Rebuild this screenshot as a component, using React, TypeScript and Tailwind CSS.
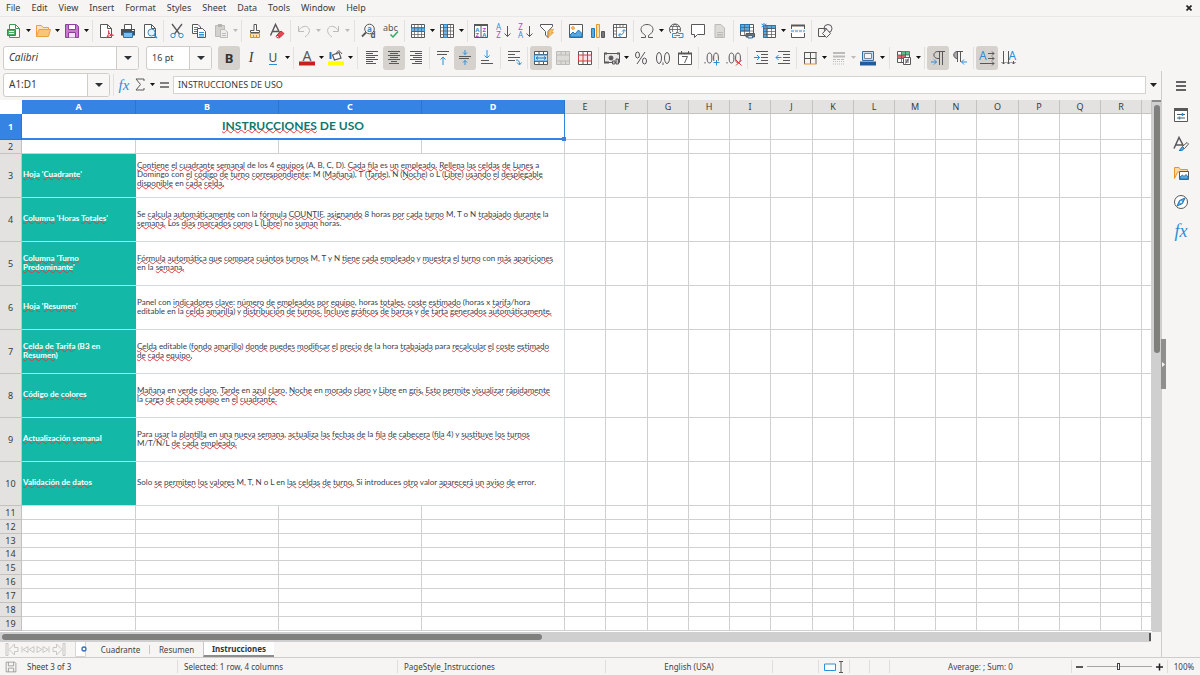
import React from "react";

const K = "#585858";
const BL = "#2d8fd6";
const FADE = "#bdbbb8";

function Svg({ children, size = 16 }: { children: React.ReactNode; size?: number }) {
  return (
    <svg width={size} height={size} viewBox="0 0 16 16" fill="none" stroke={K} strokeWidth="1" className="shrink-0 overflow-visible" aria-hidden="true">
      {children}
    </svg>
  );
}

function Glyphs({ x, y, size = 8, color = K, bold = false, children }: { x: number; y: number; size?: number; color?: string; bold?: boolean; children: string }) {
  return (
    <text x={x} y={y} fontSize={size} fill={color} stroke="none" fontWeight={bold ? 700 : 400} fontFamily="Noto Sans, sans-serif">
      {children}
    </text>
  );
}

const lines = (...d: [number, number, number][]) => d.map(([x1, x2, y]) => <path key={y} d={`M${x1} ${y}H${x2}`} />);

const icons: Record<string, React.ReactNode> = {
  newDoc: (
    <>
      <path d="M3.500 1.500H9.500L13.500 5.500V14.500H3.500Z" fill="#fff" stroke="#3a9c55" />
      <path d="M9.500 1.500V5.500H13.500" stroke="#3a9c55" />
      <path d="M1.500 6.500H9.500V12.500H1.500Z" fill="#4caf68" stroke="#2f8f4b" />
      <path d="M3 8.500H8M3 10.500H8" stroke="#fff" />
    </>
  ),
  folder: (
    <>
      <path d="M1.500 13.500V2.500H6.500L8 4.500H13.500V7" fill="#fbe3bd" stroke="#e8a33d" />
      <path d="M1.500 13.500L4 6.500H15.500L13.500 13.500Z" fill="#f7c678" stroke="#e8a33d" />
    </>
  ),
  save: (
    <>
      <path d="M1.500 1.500H12.500L14.500 3.500V14.500H1.500Z" fill="#c679cf" stroke="#8e3f9b" />
      <path d="M4.500 1.500H11.500V6.500H4.500Z" fill="#fff" stroke="#8e3f9b" />
      <path d="M4.500 14.500V9.500H11.500V14.500" fill="#f3e1f5" stroke="#8e3f9b" />
    </>
  ),
  pdf: (
    <>
      <path d="M2.500 1.500H9.500L13.500 5.500V14.500H2.500Z" fill="#fff" />
      <path d="M9.500 1.500V5.500H13.500" />
      <path d="M8 15C10.500 12.500 11 10 10.500 7.500C10.500 11 13 12.500 15.500 12.200C12.500 12 10 13 8 15Z" fill="#fff" stroke="#dc3b4b" />
    </>
  ),
  print: (
    <>
      <path d="M4.500 6V1.500H11.500V6" fill="#fff" />
      <path d="M1 6H15V12.500H1Z" fill="#4a4f54" stroke="none" />
      <path d="M3.500 9.500H12.500V14.500H3.500Z" fill="#7bbdec" stroke="#316e9e" />
      <path d="M12 7.500H14" stroke="#fff" />
    </>
  ),
  preview: (
    <>
      <path d="M2.500 1.500H9.500L13.500 5.500V14.500H2.500Z" fill="#fff" />
      <path d="M9.500 1.500V5.500H13.500" />
      <circle cx="9.500" cy="9.500" r="3.500" fill="#e6f3fc" stroke={BL} />
      <path d="M12 12L15 15" stroke={BL} strokeWidth="1.500" />
    </>
  ),
  cut: (
    <>
      <path d="M3 1L10.500 11M13 1L5.500 11" strokeWidth="1.300" />
      <circle cx="4" cy="12.500" r="2.200" stroke={BL} />
      <circle cx="12" cy="12.500" r="2.200" stroke={BL} />
    </>
  ),
  copy: (
    <>
      <path d="M1.500 1.500H7L9.500 4V10.500H1.500Z" fill="#fff" />
      <path d="M3 4.500H7M3 6.500H7M3 8.500H7" stroke={BL} />
      <path d="M6.500 5.500H11.500L14.500 8.500V14.500H6.500Z" fill="#fff" />
      <path d="M8 9.500H13M8 11.500H13M8 13H13" stroke={BL} />
    </>
  ),
  paste: (
    <>
      <path d="M2.500 2.500H11.500V13.500H2.500Z" fill="#d4d2cf" stroke={FADE} />
      <path d="M5 1H9V4H5Z" fill="#b5b3b0" stroke="none" />
      <path d="M7.500 6.500H12L14.500 9V14.500H7.500Z" fill="#eeedeb" stroke={FADE} />
      <path d="M9 10.500H13M9 12.500H13" stroke={FADE} />
    </>
  ),
  brush: (
    <>
      <path d="M7 1.500H9.500V7.500H12.500V9.500H3.500V7.500H7Z" fill="#fff" />
      <path d="M3.500 10.500H12.500V14.500H3.500Z" fill="#fbe0b5" stroke="#e0902a" />
      <path d="M6.500 12V14M9.500 12V14" stroke="#e0902a" />
    </>
  ),
  clear: (
    <>
      <path d="M1.500 12.500L6.500 1.500L11 10.500M3.500 8.500H10" strokeWidth="1.400" />
      <path d="M8 12L12 8L15 10.500L11 14.500Z" fill="#e84855" stroke="#c92a3a" />
      <path d="M8 12L11 14.500L9 15L7 13.500Z" fill="#fff" stroke="#c92a3a" />
    </>
  ),
  undo: <path d="M2.500 3V8.500H8M2.500 8C5 3.500 9 2.500 11.500 4C15 6.500 13.500 11 9 14" stroke={FADE} />,
  redo: <path d="M13.500 3V8.500H8M13.500 8C11 3.500 7 2.500 4.500 4C1 6.500 2.500 11 7 14" stroke={FADE} />,
  find: (
    <>
      <circle cx="8.500" cy="6" r="4.800" />
      <path d="M5 9.500L1 13.500" strokeWidth="1.800" />
      <Glyphs x={6} y={8.500} size={8} color={BL} bold>a</Glyphs>
      <Glyphs x={9.500} y={15} size={8} bold>d</Glyphs>
    </>
  ),
  spell: (
    <>
      <Glyphs x={0} y={8} size={9}>abc</Glyphs>
      <path d="M7.500 11.500L10 14L15 8.500" stroke="#2fa866" strokeWidth="1.500" />
    </>
  ),
  rows: (
    <>
      <path d="M1.500 1.500H14.500V14.500H1.500Z" fill="#fff" />
      <path d="M1.500 5H14.500V8.500H1.500Z" fill="#6db5ea" stroke={BL} />
      <path d="M1.500 4.500H14.500M1.500 8.500H14.500M1.500 11.500H14.500M4.500 1.500V14.500M8 1.500V14.500M11.500 1.500V14.500" strokeWidth=".7" />
    </>
  ),
  cols: (
    <>
      <path d="M1.500 1.500H14.500V14.500H1.500Z" fill="#fff" />
      <path d="M4.500 1.500H8.500V14.500H4.500Z" fill="#6db5ea" stroke={BL} />
      <path d="M1.500 4.500H14.500M1.500 8H14.500M1.500 11.500H14.500M4.500 1.500V14.500M8.500 1.500V14.500M11.500 1.500V14.500" strokeWidth=".7" />
    </>
  ),
  sort: (
    <>
      <path d="M1.500 2V14.500H14.500V2M8 3V14.500" fill="#fff" />
      <path d="M1 2H15" strokeWidth="2" />
      <Glyphs x={2.300} y={8.500} size={6} color={BL} bold>A</Glyphs>
      <Glyphs x={2.500} y={14} size={6} color="#b04ac0" bold>Z</Glyphs>
      <Glyphs x={9.500} y={8.500} size={6} color="#b04ac0" bold>Z</Glyphs>
      <Glyphs x={9.300} y={14} size={6} color={BL} bold>A</Glyphs>
    </>
  ),
  sortUp: (
    <>
      <Glyphs x={1} y={7} size={8} color={BL}>A</Glyphs>
      <Glyphs x={1.300} y={15} size={8} color="#b04ac0">Z</Glyphs>
      <path d="M12.500 3V13.500M9.500 10.500L12.500 13.500L15.500 10.500" />
    </>
  ),
  sortDown: (
    <>
      <Glyphs x={1.300} y={7} size={8} color="#b04ac0">Z</Glyphs>
      <Glyphs x={1} y={15} size={8} color={BL}>A</Glyphs>
      <path d="M12.500 3V13.500M9.500 10.500L12.500 13.500L15.500 10.500" />
    </>
  ),
  filter: (
    <>
      <path d="M1.500 1.500H13.500V3.500L9 8.500V14.500L6.500 12V8.500L1.500 3.500Z" fill="#fff" />
      <path d="M11 6.500H14.500L12.500 9.500H14.500L8.500 15L10.500 10.500H9Z" fill="#f8c06a" stroke="#e8942a" strokeWidth=".7" />
    </>
  ),
  image: (
    <>
      <path d="M1.500 1.500H14.500V14.500H1.500Z" fill="#fff" />
      <circle cx="5" cy="5" r="1.500" fill="#f8c06a" stroke="#e8942a" strokeWidth=".7" />
      <path d="M2 14V12L5 9L7 11L10.500 7L14 10.500V14Z" fill="#58a9e2" stroke="#1f78bd" />
    </>
  ),
  chart: (
    <>
      <path d="M1.500 5.500H4.500V14.500H1.500Z" fill="#58a9e2" stroke="#1f78bd" />
      <path d="M6.500 1.500H9.500V14.500H6.500Z" fill="#fbe0b5" stroke="#e8942a" />
      <path d="M11.500 8.500H14.500V14.500H11.500Z" fill="#777" />
    </>
  ),
  pivot: (
    <>
      <path d="M1.500 1.500H14.500V14.500H1.500Z" fill="#fff" />
      <path d="M1.500 4.500H14.500M4.500 1.500V14.500M8 1.500V4.500M11 1.500V4.500M1.500 8H4.500M1.500 11H4.500" strokeWidth=".8" />
      <path d="M7 12C10.500 12 12 10.500 12 7M10 8.500L12 6.500L14 8.500M8.500 10L6.500 12L8.500 14" stroke={BL} />
    </>
  ),
  omega: <path d="M2 14.500H6.500V12.500C3.500 10.500 2 8.500 2 6.500C2 3.500 4.500 1.500 8 1.500C11.500 1.500 14 3.500 14 6.500C14 8.500 12.500 10.500 9.500 12.500V14.500H14" />,
  link: (
    <>
      <circle cx="7" cy="6.500" r="5.500" fill="#fff" />
      <path d="M1.500 6.500H12.500M2.500 3.500H11.500M2.500 9.500H11M7 1C3.500 4 3.500 9 7 12M7 1C10.500 4 10.500 9 7 12" strokeWidth=".8" />
      <path d="M8 10.500H4.500V14.500H8.500M10.500 10.500H14.500V14.500H10.500M7.500 12.500H12" stroke="#f6f5f4" strokeWidth="3" />
      <path d="M8 10.500H4.500V14.500H8.500M10.500 10.500H15V14.500H10.500M7.500 12.500H12" stroke={BL} />
    </>
  ),
  comment: <path d="M1.500 1.500H14.500V11.500H7.500L4.500 14.500V11.500H1.500Z" fill="#fff" />,
  header: <path d="M3 1.500H9L12.500 5V14.500H3Z M5 9.500H11M5 11.500H11M5 13H11" fill="#dddbd8" stroke={FADE} />,
  printArea: (
    <>
      <path d="M1.500 1.500H14.500V12.500H1.500Z" fill="#fff" />
      <path d="M1.500 1.500H10.500V8H1.500Z" fill="#58a9e2" stroke="#1f78bd" />
      <path d="M1.500 4.500H14.500M1.500 8H14.500M5.500 1.500V12.500M10.500 1.500V12.500" strokeWidth=".7" />
      <path d="M7 10.500H15.500V14H7Z" fill="#6a6f74" />
      <path d="M9 12.500H13.500V15H9Z" fill="#cfe6f7" stroke="#316e9e" />
    </>
  ),
  freeze: (
    <>
      <path d="M2.500 2.500H14.500V14.500H2.500Z" fill="#fff" />
      <path d="M2.500 2.500H14.500V5.500H6V14.500H2.500Z" fill="#58a9e2" stroke="#1f78bd" />
      <path d="M2.500 5.500H14.500M2.500 8.500H14.500M2.500 11.500H14.500M6 2.500V14.500M10.500 2.500V14.500" strokeWidth=".7" />
      <path d="M3 0V5M.500 1L5.500 4M5.500 1L.500 4" stroke={BL} />
    </>
  ),
  split: (
    <>
      <path d="M1.500 6V2.500H14.500V6M1.500 10V14.500H14.500V10" fill="#fff" />
      <path d="M1 2.500H15" strokeWidth="2" />
      <path d="M1 8H15" stroke={BL} strokeDasharray="3 1" />
    </>
  ),
  shapes: (
    <>
      <path d="M1.500 5.500H9.500V13.500H1.500Z" />
      <circle cx="11" cy="5.500" r="4" />
      <path d="M9.500 6L13.500 10.500L9.500 14.500L5.500 10.500Z" fill="#f6f5f4" />
    </>
  ),
  fontColor: (
    <>
      <Glyphs x={3.500} y={10.500} size={14}>A</Glyphs>
      <path d="M0 13.500H16" stroke="#c5221f" strokeWidth="4" />
    </>
  ),
  bucket: (
    <>
      <path d="M2.500 2V9" stroke="#1f78bd" strokeWidth="2" />
      <path d="M4.500 5L11 2.500L13 8L6.500 10Z" fill="#fff" strokeWidth="1.200" />
      <path d="M9 4.500C8 1.500 10.500 0 12 1.500L14 4" />
      <path d="M0 13.500H16" stroke="#ffff00" strokeWidth="4" />
    </>
  ),
  left: lines([2, 14, 1.500], [2, 9, 3.500], [2, 14, 5.500], [2, 11, 7.500], [2, 14, 9.500], [2, 9, 11.500], [2, 12, 13.500]),
  center: lines([2, 14, 1.500], [4, 12, 3.500], [2, 14, 5.500], [4, 12, 7.500], [2, 14, 9.500], [5, 11, 11.500], [3, 13, 13.500]),
  right: lines([2, 14, 1.500], [7, 14, 3.500], [2, 14, 5.500], [5, 14, 7.500], [2, 14, 9.500], [7, 14, 11.500], [4, 14, 13.500]),
  vTop: (
    <>
      {lines([2, 14, 1.500], [2, 12, 4.500])}
      <path d="M8 15V7M5.500 9.500L8 7L10.500 9.500" stroke={BL} />
    </>
  ),
  vMiddle: (
    <>
      {lines([2, 14, 6.500], [2, 12, 8.500])}
      <path d="M8 0V4.500M6 2.500L8 4.500L10 2.500M8 15V10.500M6 12.500L8 10.500L10 12.500" stroke={BL} />
    </>
  ),
  vBottom: (
    <>
      {lines([2, 10, 10.500], [2, 14, 13.500])}
      <path d="M8 0V8M5.500 5.500L8 8L10.500 5.500" stroke={BL} />
    </>
  ),
  wrap: (
    <>
      {lines([2, 14, 1.500], [2, 9, 4.500], [2, 14, 7.500], [2, 9, 10.500])}
      <path d="M10 10C13 10 13.500 11.500 13.500 14.500M11 12.500L13.500 15L15.500 12.500" stroke={BL} />
    </>
  ),
  merge: (
    <>
      <path d="M1.500 1.500H14.500V14.500H1.500Z M1.500 4.500H14.500M1.500 11.500H14.500M6 1.500V4.500M10.500 1.500V4.500M6 11.500V14.500M10.500 11.500V14.500" fill="#fff" />
      <path d="M1.500 5H14.500V11H1.500Z" fill="#c7e3f7" stroke={BL} />
      <path d="M3 8H13M5 6.500L3 8L5 9.500M11 6.500L13 8L11 9.500" stroke="#1f78bd" />
    </>
  ),
  unmerge: <path d="M1.500 1.500H14.500V14.500H1.500Z M1.500 5H14.500M1.500 11H14.500M6 1.500V5M10.500 1.500V5M6 11V14.500M10.500 11V14.500" fill="#dddbd8" stroke={FADE} />,
  splitCells: (
    <>
      <path d="M1.500 1.500H14.500V14.500H1.500Z M6 1.500V14.500M10.500 1.500V14.500" fill="#fff" />
      <path d="M1.500 5H14.500V11H1.500Z M6 5V11M10.500 5V11" fill="#fde3e3" stroke="#d4383f" />
    </>
  ),
  currency: (
    <>
      <path d="M.500 3.500H15.500V12.500H.500Z" fill="#e9e8e6" />
      <path d="M0 3.500H3M13 3.500H16M0 12.500H5" strokeWidth="2" />
      <circle cx="7" cy="8" r="2" fill="#585858" />
      <path d="M8.500 11H11V14H8.500ZM12 9H14.500V14H12Z" fill="#ccc" />
    </>
  ),
  percent: (
    <>
      <ellipse cx="4.500" cy="5" rx="2" ry="3" />
      <ellipse cx="11.500" cy="11" rx="2" ry="3" />
      <path d="M12 2L4 14" />
    </>
  ),
  number: (
    <>
      <ellipse cx="4" cy="8" rx="2.500" ry="5.500" />
      <ellipse cx="12" cy="8" rx="2.500" ry="5.500" />
      <path d="M8 12.500V15" />
    </>
  ),
  date: (
    <>
      <path d="M1.500 3.500H14.500V14.500H1.500Z" fill="#fff" />
      <path d="M1 3.500H15" strokeWidth="2" />
      <path d="M4.500 1V4M11.500 1V4M5 6.500H10.500L7.500 13" />
    </>
  ),
  addDec: (
    <>
      <path d="M1 12V13.500" />
      <ellipse cx="5.500" cy="8" rx="2.400" ry="5" />
      <ellipse cx="12" cy="8" rx="2.400" ry="5" />
      <path d="M12.500 9.500V16M9 12.500H16" stroke="#f6f5f4" strokeWidth="3" />
      <path d="M12.500 10V15.500M9.500 12.500H15.500" stroke={BL} />
    </>
  ),
  delDec: (
    <>
      <path d="M1 12V13.500" />
      <ellipse cx="5.500" cy="8" rx="2.400" ry="5" />
      <ellipse cx="12" cy="8" rx="2.400" ry="5" />
      <path d="M10 10L15.500 15.500M15.500 10L10 15.500" stroke="#e0383f" />
    </>
  ),
  indent: (
    <>
      {lines([3, 15, 1.500], [8, 15, 4.500], [8, 15, 7.500], [8, 15, 10.500], [3, 15, 13.500])}
      <path d="M1 7.500H6.500M4 5L6.500 7.500L4 10" stroke={BL} />
    </>
  ),
  outdent: (
    <>
      {lines([3, 15, 1.500], [8, 15, 4.500], [8, 15, 7.500], [8, 15, 10.500], [3, 15, 13.500])}
      <path d="M1 7.500H6.500M3.500 5L1 7.500L3.500 10" stroke={BL} />
    </>
  ),
  border: (
    <>
      <path d="M2.500 2V14M14 2V14M8.500 2V14M2 2.500H14.500M2 8.500H14" />
      <path d="M2 14H14.500" stroke="#e8942a" />
    </>
  ),
  lineStyle: (
    <>
      <path d="M2 3H14M2 6.500H14" stroke={FADE} strokeWidth="2" />
      <path d="M2 9.500H14" stroke={FADE} strokeDasharray="3 1" />
      <path d="M2 11.500H14M2 14H14" stroke={FADE} strokeDasharray="1 1" />
    </>
  ),
  borderColor: (
    <>
      <path d="M2.500 1.500H13.500V10.500H2.500Z" fill="#c9dff2" stroke="#2f6ea8" />
      <path d="M4.500 3.500H11.500V8.500H4.500Z" fill="#f6f5f4" stroke="#7a8794" />
      <path d="M0 13.500H16" stroke="#235c9c" strokeWidth="4" />
    </>
  ),
  conditional: (
    <>
      <path d="M1.500 1.500H13.500V12.500H1.500Z" fill="#fff" />
      <path d="M5.500 1.500H13.500V5H5.500Z" fill="#57c084" stroke="none" />
      <path d="M1.500 5H9.500V8.500H1.500Z" fill="#e8636a" stroke="none" />
      <path d="M1.500 5H13.500M1.500 8.500H13.500M5.500 1.500V12.500M9.500 1.500V12.500" strokeWidth=".8" />
      <path d="M7.500 7.500H14.500V14.500H7.500Z" fill="#fff" />
      <path d="M9 10H13M9 12H13M12.500 8.500L9.500 13.500" />
    </>
  ),
  ltr: (
    <>
      <path d="M9.500 15V1.500M12.500 15V1.500M15 1.500H8C2.500 1.500 2.500 8.500 8 8.500H9.500" />
      <path d="M1 12H6.500M4 9.500L6.500 12L4 14.500" stroke={BL} />
    </>
  ),
  rtl: (
    <>
      <path d="M5.500 1.500C.500 1.500.500 8.500 5.500 8.500Z" fill="#aaa" />
      <path d="M5.500 12V1.500M8.500 12V1.500M11 1.500H4.500" />
      <path d="M15 12H9.500M12 9.500L9.500 12L12 14.500" stroke={BL} />
    </>
  ),
  textLtr: (
    <>
      <Glyphs x={0} y={9.500} size={12} color={BL}>A</Glyphs>
      <path d="M9 3.500H15M13 1.500L15 3.500L13 5.500M9 8.500H15M13 6.500L15 8.500L13 10.500M1 13.500H15M13 11.500L15 13.500L13 15.500" />
    </>
  ),
  textTtb: (
    <>
      <Glyphs x={7.500} y={10} size={12} color={BL}>A</Glyphs>
      <path d="M2.500 1V14M.500 12L2.500 14L4.500 12M7.500 1V14M5.500 12L7.500 14L9.500 12M12.500 11V14M10.500 12L12.500 14L14.500 12" />
    </>
  ),
  menu: <path d="M3 4H13M3 8H13M3 12H13" stroke="#333" strokeWidth="1.600" />,
  properties: (
    <>
      <path d="M1.500 1.500H14.500V14.500H1.500Z" fill="#fff" />
      <path d="M1 2.500H15" strokeWidth="3" />
      <path d="M4 7.500H12M4 11H12" />
      <path d="M9.500 6V9M6.500 9.500V12.500" stroke={BL} strokeWidth="1.500" />
    </>
  ),
  styles: (
    <>
      <path d="M1 12.500L6 1.500L10.500 10M3 9H9.500" strokeWidth="1.500" />
      <path d="M9.500 10.500L14 6.500L15.500 8L11.500 12.500Z" fill="#fff" />
      <path d="M6 14.500C8 14.500 7.500 11 9.500 11C12 12 11 15 6 14.500Z" fill="#58a9e2" stroke="#1f78bd" />
    </>
  ),
  gallery: (
    <>
      <path d="M1.500 13.500V2.500H6L7.500 4.500H14.500V7H4.500L1.500 13.500Z" fill="#fbd9a5" stroke="#e8942a" />
      <path d="M6.500 6.500H15.500V14.500H6.500Z" fill="#fff" />
      <path d="M7 14V12L9.500 10L11 11.500L13 9.500L15 12V14Z" fill="#58a9e2" stroke="#1f78bd" />
    </>
  ),
  navigator: (
    <>
      <circle cx="8" cy="8" r="6.500" fill="#fff" />
      <path d="M12 4L9.500 9.500L4 12L6.500 6.500Z" fill="#58a9e2" stroke="#1f78bd" />
      <circle cx="8" cy="8" r="1" fill="#fff" stroke="none" />
    </>
  ),
  saveGray: <path d="M1.500 1.500H13L14.500 3V14.500H1.500Z M4.500 1.500V6.500H11.500V1.500M4.500 14.500V9.500H11.500V14.500" stroke="#8a8886" />,
};

function Fx({ big = false }: { big?: boolean }) {
  return <span className={big ? "font-[Liberation_Serif] text-[18px] italic leading-4 text-[#2d8fd6]" : "font-[Liberation_Serif] text-[15px] italic leading-4 text-[#2d8fd6]"}>fx</span>;
}

function Tri({ faded = false }: { faded?: boolean }) {
  return (
    <svg width="5" height="3" viewBox="0 0 5 3" aria-hidden="true">
      <path d="M0 0H5L2.500 3Z" fill={faded ? FADE : "#111"} />
    </svg>
  );
}

type Tool = { icon: string; label: string; menu?: boolean; on?: boolean; off?: boolean } | "|" | "||";

function t(icon: string, label: string, flags = ""): Tool {
  return { icon, label, menu: flags.includes("m"), on: flags.includes("o"), off: flags.includes("x") };
}

const standard: Tool[] = [
  t("newDoc", "New", "m"), t("folder", "Open", "m"), t("save", "Save", "m"), "|",
  t("pdf", "Export as PDF"), t("print", "Print"), t("preview", "Print Preview"), "|",
  t("cut", "Cut"), t("copy", "Copy"), t("paste", "Paste", "mx"), "|",
  t("brush", "Clone Formatting"), t("clear", "Clear Formatting"), "|",
  t("undo", "Undo", "mx"), t("redo", "Redo", "mx"), "||",
  t("find", "Find and Replace"), t("spell", "Spelling"), "|",
  t("rows", "Row", "m"), t("cols", "Column", "m"), "|",
  t("sort", "Sort"), t("sortUp", "Sort Ascending"), t("sortDown", "Sort Descending"), t("filter", "AutoFilter"), "||",
  t("image", "Insert Image"), t("chart", "Insert Chart"), t("pivot", "Pivot Table"), "|",
  t("omega", "Special Character", "m"), t("link", "Hyperlink"), t("comment", "Comment"), t("header", "Headers and Footers", "x"), "|",
  t("printArea", "Print Area"), t("freeze", "Freeze Rows and Columns", "m"), t("split", "Split Window"), "|",
  t("shapes", "Draw Functions"),
];

const formatting: Tool[] = [
  t("bold", "Bold", "o"), t("italic", "Italic"), t("underline", "Underline", "m"), "|",
  t("fontColor", "Font Color", "m"), t("bucket", "Background Color", "m"), "||",
  t("left", "Align Left"), t("center", "Center Horizontally", "o"), t("right", "Align Right"), "|",
  t("vTop", "Align Top"), t("vMiddle", "Center Vertically", "o"), t("vBottom", "Align Bottom"), "|",
  t("wrap", "Wrap Text"), "|",
  t("merge", "Merge and Center", "o"), t("unmerge", "Merge Cells", "x"), t("splitCells", "Unmerge Cells"), "|",
  t("currency", "Currency", "m"), t("percent", "Percent"), t("number", "Number"), t("date", "Date"), "|",
  t("addDec", "Add Decimal Place"), t("delDec", "Delete Decimal Place"), "|",
  t("indent", "Increase Indent"), t("outdent", "Decrease Indent"), "|",
  t("border", "Borders", "m"), t("lineStyle", "Border Style", "mx"), t("borderColor", "Border Color", "m"), "||",
  t("conditional", "Conditional Formatting", "m"), "|",
  t("ltr", "Left-to-Right", "o"), t("rtl", "Right-to-Left"), "|",
  t("textLtr", "Text Left to Right", "o"), t("textTtb", "Text Top to Bottom"),
];

function ToolIcon({ name }: { name: string }) {
  if (name === "bold") return <span className="text-[13px] font-bold leading-4 text-[#333]">B</span>;
  if (name === "italic") return <span className="font-[Liberation_Serif] text-[14px] italic leading-4">I</span>;
  if (name === "underline") return <span className="border-b border-[#2d8fd6] text-[12px] leading-[13px] text-[#4a4a4a]">U</span>;
  return <Svg>{icons[name]}</Svg>;
}

function Tools({ items }: { items: Tool[] }) {
  return (
    <>
      {items.map((it, i) => {
        if (it === "|") return <span key={i} className="mx-[2px] h-[22px] w-px shrink-0 bg-[#e3e1de]" />;
        if (it === "||") return <span key={i} className="mx-[3px] h-[22px] w-px shrink-0 bg-[#e3e1de]" />;
        return (
          <span key={i} className="flex shrink-0 items-center">
            <button
              type="button"
              aria-label={it.label}
              disabled={it.off}
              className={it.on ? "flex h-6 w-[22px] items-center justify-center rounded-[3px] bg-[#d5d1cd]" : "flex h-6 w-[22px] items-center justify-center"}
            >
              <ToolIcon name={it.icon} />
            </button>
            {it.menu && (
              <button type="button" aria-label={`${it.label} options`} disabled={it.off} className="flex h-6 w-[7px] items-center justify-center">
                <Tri faded={it.off} />
              </button>
            )}
          </span>
        );
      })}
    </>
  );
}

function Combo({ label, value, className, inputClass }: { label: string; value: string; className: string; inputClass: string }) {
  return (
    <div className={`flex h-6 shrink-0 items-stretch overflow-hidden rounded-[3px] border border-[#d0ccc8] bg-white ${className}`}>
      <input aria-label={label} defaultValue={value} className={`w-0 min-w-0 flex-1 bg-transparent px-[5px] outline-none ${inputClass}`} />
      <button type="button" aria-label={`${label} list`} className="flex w-[22px] items-center justify-center border-l border-[#d0ccc8] bg-[#f8f7f6]">
        <svg width="8" height="4" viewBox="0 0 8 4" aria-hidden="true"><path d="M0 0H8L4 4Z" fill="#2e3436" /></svg>
      </button>
    </div>
  );
}

const menus = ["File", "Edit", "View", "Insert", "Format", "Styles", "Sheet", "Data", "Tools", "Window", "Help"];

const columns: { name: string; w: string; sel?: boolean }[] = [
  { name: "A", w: "w-[114px]", sel: true },
  { name: "B", w: "w-[143px]", sel: true },
  { name: "C", w: "w-[143px]", sel: true },
  { name: "D", w: "w-[143px]", sel: true },
  { name: "E", w: "w-[41px]" },
  { name: "F", w: "w-[42px]" },
  { name: "G", w: "w-[41px]" },
  { name: "H", w: "w-[41px]" },
  { name: "I", w: "w-[41px]" },
  { name: "J", w: "w-[42px]" },
  { name: "K", w: "w-[41px]" },
  { name: "L", w: "w-[41px]" },
  { name: "M", w: "w-[41px]" },
  { name: "N", w: "w-[41px]" },
  { name: "O", w: "w-[42px]" },
  { name: "P", w: "w-[41px]" },
  { name: "Q", w: "w-[41px]" },
  { name: "R", w: "w-[41px]" },
  { name: "", w: "" },
];

// Words inside braces are flagged by the spell checker.
const instructions: { title: string[]; body: string[] }[] = [
  {
    title: ["{Hoja} '{Cuadrante}'"],
    body: [
      "{Contiene el cuadrante semanal} de los 4 {equipos} (A, B, C, D). {Cada} {fila} es {un empleado.} {Rellena las celdas de} {Lunes} a",
      "Domingo con {el código de turno correspondiente}: M ({Mañana}), T ({Tarde}), N ({Noche}) o L ({Libre}) {usando el desplegable}",
      "{disponible} en {cada celda.}",
    ],
  },
  {
    title: ["{Columna} 'Horas {Totales}'"],
    body: [
      "Se {calcula automáticamente} con la {fórmula} {COUNTIF}, {asignando} 8 horas {por} {cada} {turno} M, T o N {trabajado} {durante} la",
      "{semana.} Los {días marcados como} L ({Libre}) no {suman} horas.",
    ],
  },
  {
    title: ["{Columna} '{Turno}", "{Predominante}'"],
    body: [
      "{Fórmula automática que compara cuántos turnos} M, T y N {tiene cada empleado} y {muestra} {el turno} con {más apariciones}",
      "en la {semana.}",
    ],
  },
  {
    title: ["{Hoja} '{Resumen}'"],
    body: [
      "Panel con {indicadores clave}: {número de empleados por equipo}, horas {totales}, {coste estimado} (horas x {tarifa}/hora",
      "editable en la {celda amarilla}) y {distribución de turnos.} {Incluye gráficos de barras} y {de tarta generados automáticamente.}",
    ],
  },
  {
    title: ["{Celda de Tarifa} (B3 en", "{Resumen})"],
    body: [
      "{Celda} editable ({fondo amarillo}) {donde puedes modificar el precio de} la hora {trabajada} para {recalcular el coste estimado}",
      "{de cada equipo.}",
    ],
  },
  {
    title: ["{Código de colores}"],
    body: [
      "{Mañana} en {verde claro}, {Tarde} en {azul claro}, {Noche} en {morado claro} y {Libre} en {gris.} {Esto permite} {visualizar rápidamente}",
      "la {carga de cada equipo} en {el cuadrante.}",
    ],
  },
  {
    title: ["{Actualización semanal}"],
    body: [
      "Para {usar} la {plantilla} en {una nueva semana}, {actualiza las fechas de} la {fila de cabecera} ({fila} 4) y {sustituye los turnos}",
      "M/T/N/L {de cada empleado.}",
    ],
  },
  {
    title: ["{Validación de datos}"],
    body: ["Solo {se permiten los valores} M, T, N o L en {las} {celdas} {de turno.} Si introduces {otro} valor {aparecerá} {un} {aviso de} error."],
  },
];

function Checked({ text }: { text: string }) {
  return (
    <span className="block whitespace-nowrap">
      {text.split(/(\{[^}]*\})/).map((part, i) =>
        part.startsWith("{")
          ? part.slice(1, -1).split(/( )/).map((w, j) =>
              w === " " ? " " : (
                <span key={`${i}-${j}`} className="underline decoration-[#e33b3b] decoration-wavy decoration-[1px] -underline-offset-1 [text-decoration-skip-ink:none]">
                  {w}
                </span>
              ),
            )
          : part,
      )}
    </span>
  );
}

const EDGE = "border-b border-r border-[#d0d0d0]";

function RowHead({ n, sel = false }: { n: number; sel?: boolean }) {
  return (
    <th
      scope="row"
      className={
        sel
          ? "border-b border-r border-[#2b74cf] bg-[#3584e4] p-0 text-center font-bold text-white"
          : "border-b border-r border-[#c4c2c0] bg-[#e3e2e0] p-0 text-center font-normal text-[#3a3a3a]"
      }
    >
      {n}
    </th>
  );
}

function Blank({ count, from }: { count: number; from: string }) {
  return <>{Array.from({ length: count }, (_, i) => <td key={`${from}${i}`} className={`${EDGE} p-0`} />)}</>;
}

const tail = [
  "h-[14px]", "h-[14px]", "h-[14px]", "h-[13px]", "h-[14px]", "h-[14px]", "h-[14px]", "h-[14px]", "h-[14px]",
];

function Sheet() {
  return (
    <table className="w-full table-fixed border-separate border-spacing-0 text-[9px] leading-[12px]">
      <colgroup>
        <col className="w-[22px]" />
        {columns.map((c, i) => <col key={i} className={c.w} />)}
      </colgroup>
      <thead>
        <tr className="h-[14px]">
          <td className="p-0" />
          {columns.map((c, i) => (
            <th
              key={i}
              scope="col"
              className={
                c.sel
                  ? "border-r border-[#2b74cf] bg-[#3584e4] p-0 font-bold text-white"
                  : "border-b border-r border-[#c4c2c0] bg-[#e3e2e0] p-0 font-normal text-[#3a3a3a]"
              }
            >
              {c.name}
            </th>
          ))}
        </tr>
      </thead>
      <tbody>
        <tr className="h-[26px]">
          <RowHead n={1} sel />
          <td colSpan={4} className="relative border-b-2 border-r border-[#3584e4] p-0 text-center font-[Lato] text-[12px] font-bold leading-[18px] text-[#0f766e]">
            <Checked text="{INSTRUCCIONES} DE USO" />
            <span className="absolute -bottom-[3px] -right-[2px] h-[4px] w-[4px] bg-[#3584e4]" />
          </td>
          <Blank count={15} from="r1" />
        </tr>
        <tr className="h-[14px]">
          <RowHead n={2} />
          <Blank count={19} from="r2" />
        </tr>
        {instructions.map((row, r) => (
          <tr key={r} className="h-[44px]">
            <RowHead n={r + 3} />
            <td className="border-b border-[#d0d8d8] bg-[#14b8a6] bg-clip-padding p-0 pb-[2px] pl-px font-[Lato] text-[8px] font-bold leading-[9px] text-white">
              {row.title.map((l) => <Checked key={l} text={l} />)}
            </td>
            <td colSpan={3} className="border-b border-r border-[#d1d9dc] p-0 pb-[2px] pl-px font-[Lato] text-[8px] leading-[9px] text-[#374151]">
              {row.body.map((l) => <Checked key={l} text={l} />)}
            </td>
            <Blank count={15} from={`b${r}`} />
          </tr>
        ))}
        {tail.map((h, r) => (
          <tr key={r} className={h}>
            <RowHead n={r + 11} />
            <Blank count={19} from={`t${r}`} />
          </tr>
        ))}
      </tbody>
    </table>
  );
}

function FormulaBar() {
  return (
    <div className="flex h-[29px] shrink-0 items-center pb-[2px] pl-[3px]">
      <Combo label="Name Box" value="A1:D1" className="w-[107px]" inputClass="text-[10px]" />
      <span className="ml-[3px] h-[22px] w-px bg-[#e3e1de]" />
      <button type="button" aria-label="Function Wizard" className="ml-[2px] flex w-4 items-center justify-center"><Fx /></button>
      <button type="button" aria-label="Select Function" className="flex w-4 items-center justify-center">
        <svg width="10" height="13" viewBox="0 0 10 13" fill="none" stroke={K} aria-hidden="true"><path d="M9 3V1H1L5.500 6.500L1 12H9V10" /></svg>
      </button>
      <button type="button" aria-label="Select Function options" className="flex w-2 items-center justify-center"><Tri /></button>
      <button type="button" aria-label="Formula" className="flex w-[17px] items-center justify-center">
        <svg width="9" height="6" viewBox="0 0 9 6" stroke={K} strokeWidth="1.500" aria-hidden="true"><path d="M0 1H9M0 5H9" /></svg>
      </button>
      <input aria-label="Input line" defaultValue="INSTRUCCIONES DE USO" className="h-[18px] min-w-0 flex-1 border border-[#d5d3d0] bg-white px-1 text-[9px] text-[#3a3a3a] outline-none" />
      <button type="button" aria-label="Expand Formula Bar" className="flex w-[15px] items-center justify-center">
        <svg width="7" height="4" viewBox="0 0 7 4" aria-hidden="true"><path d="M0 0H7L3.500 4Z" fill="#222" /></svg>
      </button>
    </div>
  );
}

function NavArrows() {
  const c = "#c9c7c4";
  return (
    <>
      <button type="button" aria-label="First sheet" className="w-[16px]"><svg width="15" height="13" viewBox="0 0 15 13" fill="none" stroke={c}><path d="M1 .500H3V12.500H1ZM4 6.500L9.500 1V4.500H13V8.500H9.500V12Z" /></svg></button>
      <button type="button" aria-label="Previous sheet" className="w-[15px]"><svg width="14" height="13" viewBox="0 0 14 13" fill="none" stroke={c}><path d="M1 3.500V9.500M2 6.500L7 3.500V9.500ZM8 6.500L13 3.500V9.500Z" /></svg></button>
      <button type="button" aria-label="Next sheet" className="w-[15px]"><svg width="14" height="13" viewBox="0 0 14 13" fill="none" stroke={c}><path d="M13 3.500V9.500M12 6.500L7 3.500V9.500ZM6 6.500L1 3.500V9.500Z" /></svg></button>
      <button type="button" aria-label="Last sheet" className="w-[16px]"><svg width="15" height="13" viewBox="0 0 15 13" fill="none" stroke={c}><path d="M14 .500H12V12.500H14ZM11 6.500L5.500 1V4.500H2V8.500H5.500V12Z" /></svg></button>
    </>
  );
}

function TabBar() {
  return (
    <nav className="flex h-4 shrink-0 items-center border-b border-[#cfcdca] bg-[#f6f5f4] pl-[5px] text-[8px] text-[#3f3f3f]">
      <NavArrows />
      <button type="button" aria-label="Add sheet" className="ml-2 w-[12px]">
        <svg width="12" height="15" viewBox="0 0 12 15" fill="#fff"><path d="M.500 0V14.500H10.500V0" stroke="#d8d6d3" /><circle cx="9" cy="7" r="2" stroke="#2f6fb8" strokeWidth="1.300" /></svg>
      </button>
      <button type="button" className="ml-[5px] w-[57px] text-center">Cuadrante</button>
      <span className="h-[9px] w-px bg-[#c9c7c4]" />
      <button type="button" className="w-[53px] text-center">Resumen</button>
      <button type="button" aria-current="page" className="h-[15px] w-[71px] border-b-2 border-l border-b-[#8c8c8c] border-l-[#c9c7c4] bg-white text-center font-bold text-[#333]">Instrucciones</button>
    </nav>
  );
}

function StatusBar() {
  const cell = "flex h-[13px] items-center border-r border-[#e0deda]";
  return (
    <footer className="flex h-[17px] shrink-0 items-center bg-[#f6f5f4] text-[8px] text-[#3f3f3f]">
      <div className="flex h-[13px] w-[22px] items-center justify-center"><Svg size={12}>{icons.saveGray}</Svg></div>
      <div className={`${cell} w-[156px] pl-[5px]`}>Sheet 3 of 3</div>
      <div className={`${cell} w-[220px] pl-[6px]`}>Selected: 1 row, 4 columns</div>
      <div className={`${cell} w-[208px] pl-[6px]`}>PageStyle_Instrucciones</div>
      <div className={`${cell} w-[167px] justify-center`}>English (USA)</div>
      <div className={`${cell} w-[46px]`} />
      <div className={`${cell} w-[31px] justify-center`}>
        <svg width="20" height="12" viewBox="0 0 20 12" fill="none" stroke={K} aria-hidden="true"><path d="M.500 3H11.500V9.500H.500Z" fill="#fff" stroke={BL} /><path d="M17 1V11M15 .500H19M15 11.500H19" /></svg>
      </div>
      <div className={`${cell} w-[20px]`} />
      <div className={`${cell} w-[20px]`} />
      <div className={`${cell} min-w-0 flex-1 justify-center`}>Average: ; Sum: 0</div>
      <div className={`${cell} w-[96px] justify-center gap-1`}>
        <button type="button" aria-label="Zoom out" className="flex w-[8px] items-center"><svg width="8" height="8" viewBox="0 0 8 8" stroke="#222" strokeWidth="1.500"><path d="M1 4H8" /></svg></button>
        <input
          type="range"
          aria-label="Zoom"
          min={0}
          max={100}
          defaultValue={49}
          className="h-[8px] w-[65px] appearance-none bg-transparent bg-[linear-gradient(#a8a6a3,#a8a6a3)] bg-[length:100%_1px] bg-center bg-no-repeat [&::-webkit-slider-thumb]:h-[7px] [&::-webkit-slider-thumb]:w-[3px] [&::-webkit-slider-thumb]:appearance-none [&::-webkit-slider-thumb]:border [&::-webkit-slider-thumb]:border-[#444] [&::-webkit-slider-thumb]:bg-white"
        />
        <button type="button" aria-label="Zoom in" className="flex w-[8px] items-center"><svg width="8" height="8" viewBox="0 0 8 8" stroke="#222" strokeWidth="1.500"><path d="M0 4H7M3.500 .500V7.500" /></svg></button>
      </div>
      <button type="button" className="w-[32px] text-center">100%</button>
    </footer>
  );
}

export default function App() {
  return (
    <div className="flex h-screen flex-col overflow-hidden bg-[#f6f5f4] text-[#3a3a3a]" style={{ fontFamily: "'Noto Sans', sans-serif" }}>
      <header className="flex h-[17px] shrink-0 items-center border-b border-[#eae8e6] pl-[6px] text-[9px]">
        <nav className="flex gap-[11px]">
          {menus.map((m) => <button key={m} type="button">{m}</button>)}
        </nav>
        <button type="button" aria-label="Close document" className="ml-auto mr-[8px] flex">
          <svg width="6" height="6" viewBox="0 0 6 6" stroke="#222" strokeWidth="1.700"><path d="M.500 .500L5.500 5.500M5.500 .500L.500 5.500" /></svg>
        </button>
      </header>
      <div className="flex h-[27px] shrink-0 items-center pl-[3px]">
        <Tools items={standard} />
      </div>
      <div className="flex h-[27px] shrink-0 items-center pl-[3px]">
        <Combo label="Font Name" value="Calibri" className="mr-[7px] w-[136px]" inputClass="text-[10px] italic" />
        <Combo label="Font Size" value="16 pt" className="mr-[6px] w-[66px]" inputClass="text-[9px]" />
        <Tools items={formatting} />
      </div>
      <div className="flex min-h-0 flex-1">
        <main className="flex min-w-0 flex-1 flex-col">
          <FormulaBar />
          <div className="flex min-h-0 flex-1">
            <div className="min-w-0 flex-1 overflow-hidden bg-white">
              <Sheet />
            </div>
            <div className="w-[9px] shrink-0 border-t-2 border-[#8a8a8a] bg-[#cfcfcf] pt-[3px]">
              <div className="mx-auto h-[47%] w-[6px] rounded-full bg-[#7f7f7e]" />
            </div>
          </div>
          <div className="flex h-[10px] shrink-0 items-center pr-[10px]">
            <div className="flex h-full flex-1 items-center justify-between bg-[#cfcfcf] pl-[2px]">
              <div className="h-[6px] w-[47%] rounded-full bg-[#7f7f7e]" />
              <div className="h-[8px] w-[2px] bg-[#555]" />
            </div>
          </div>
          <TabBar />
        </main>
        <aside className="relative flex w-[39px] shrink-0 flex-col items-center gap-[13px] border-b border-l border-[#cfcdca] pt-[7px]">
          {["menu", "properties", "styles", "gallery", "navigator"].map((n) => (
            <button key={n} type="button" aria-label={n} className="flex"><Svg>{icons[n]}</Svg></button>
          ))}
          <button type="button" aria-label="functions" className="flex"><Fx big /></button>
          <button type="button" aria-label="Hide sidebar" className="absolute -left-px top-[268px] flex h-[50px] w-[5px] items-center justify-center bg-[#8f8f8e]">
            <svg width="3" height="5" viewBox="0 0 3 5"><path d="M0 0L3 2.500L0 5Z" fill="#f6f5f4" /></svg>
          </button>
        </aside>
      </div>
      <StatusBar />
    </div>
  );
}
